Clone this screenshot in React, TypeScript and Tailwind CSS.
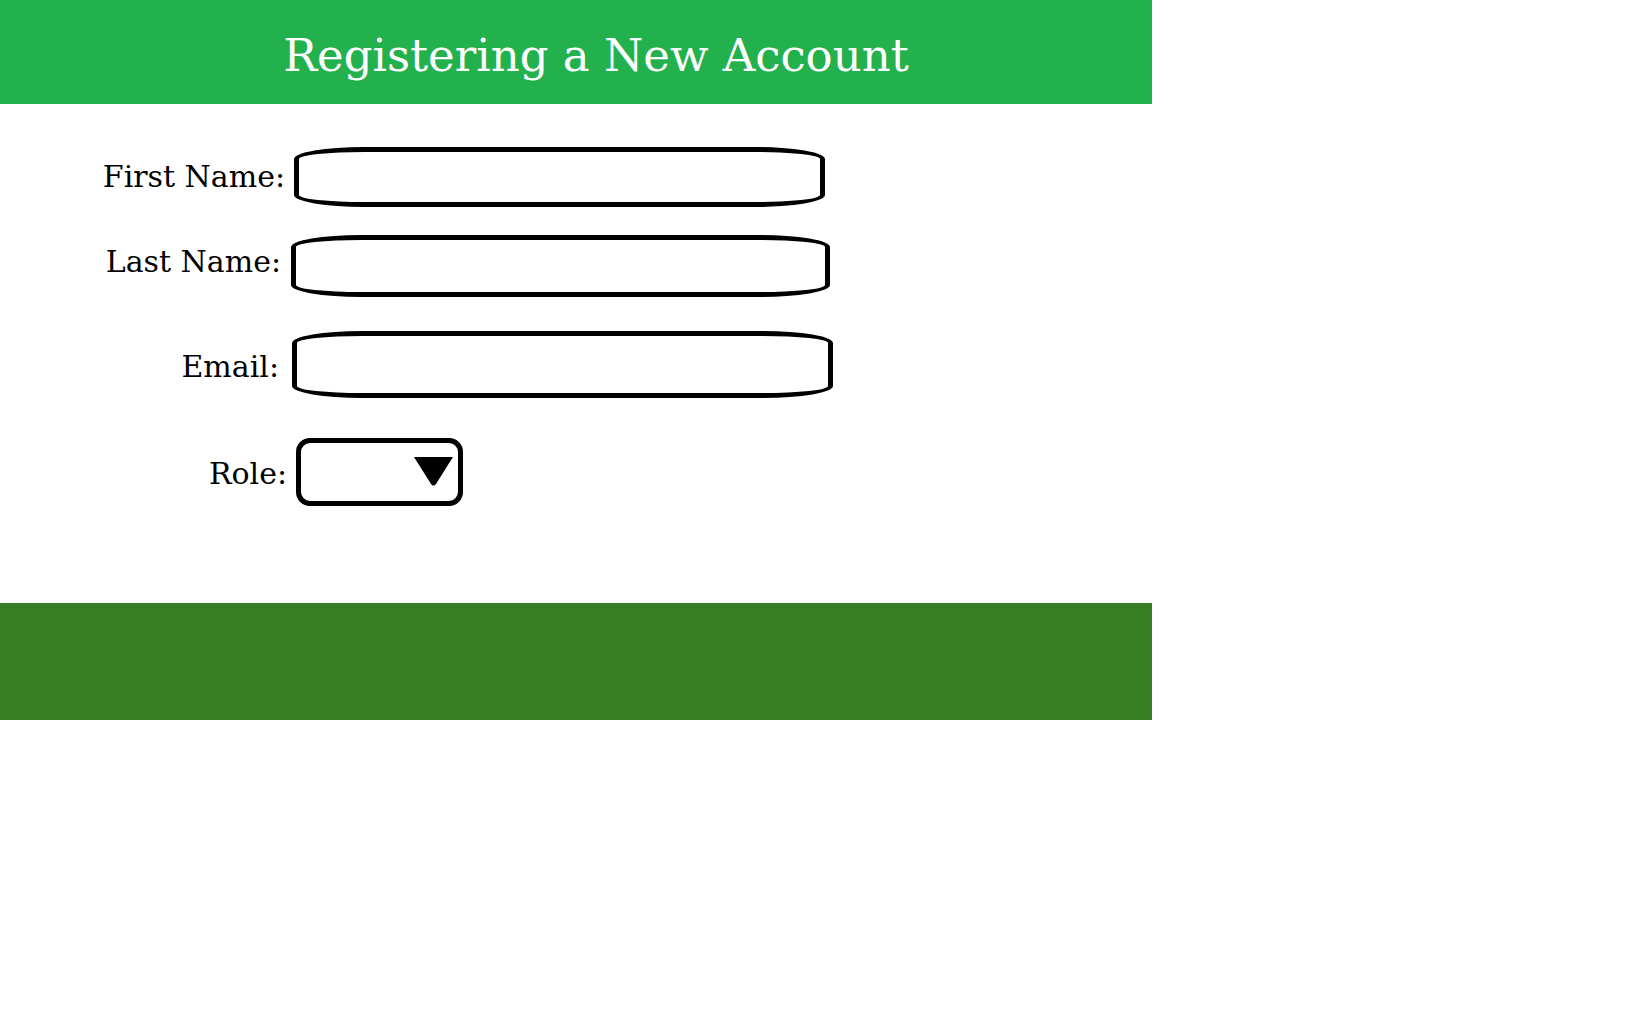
import React from "react";

const serif = { fontFamily: '"DejaVu Serif", "Liberation Serif", serif' };

function Field({
  label,
  rowClass,
  labelClass,
  boxClass,
}: {
  label: string;
  rowClass: string;
  labelClass: string;
  boxClass: string;
}) {
  return (
    <div className={"flex items-center " + rowClass}>
      <div className={"text-right text-[30px] leading-none text-black " + labelClass} style={serif}>
        {label}
      </div>
      <div className={"border-[5px] border-black bg-white rounded-[70px/12px] " + boxClass} />
    </div>
  );
}

export default function App() {
  return (
    <div className="w-[1646px] h-[1029px] bg-white">
      <div className="w-[1152px]">
        <header className="h-[104px] bg-[#23b14d] flex items-center justify-center pl-[40px] pt-[6px]">
          <h1 className="text-white text-[45px] leading-none" style={serif}>
            Registering a New Account
          </h1>
        </header>
        <main className="h-[499px] flex flex-col">
          <Field
            label="First Name:"
            rowClass="mt-[43px]"
            labelClass="w-[285px]"
            boxClass="ml-[9px] w-[531px] h-[60px]"
          />
          <Field
            label="Last Name:"
            rowClass="mt-[28px]"
            labelClass="w-[281px] pb-[8px]"
            boxClass="ml-[10px] w-[539px] h-[62px]"
          />
          <Field
            label="Email:"
            rowClass="mt-[34px]"
            labelClass="w-[279px] pt-[4px]"
            boxClass="ml-[13px] w-[541px] h-[67px]"
          />
          <div className="flex items-center mt-[40px]">
            <div className="w-[287px] text-right text-[30px] leading-none text-black pt-[4px]" style={serif}>
              Role:
            </div>
            <div className="ml-[9px] w-[167px] h-[68px] border-[5px] border-black rounded-[14px] flex items-center justify-end pr-[4px] pb-[2px]">
              <svg width="41" height="31" viewBox="0 0 41 31">
                <path d="M1 1 L40 1 L23 28 Q20.5 31 18 28 Z" fill="black" />
              </svg>
            </div>
          </div>
        </main>
        <footer className="h-[117px] bg-[#387e23]" />
      </div>
    </div>
  );
}
